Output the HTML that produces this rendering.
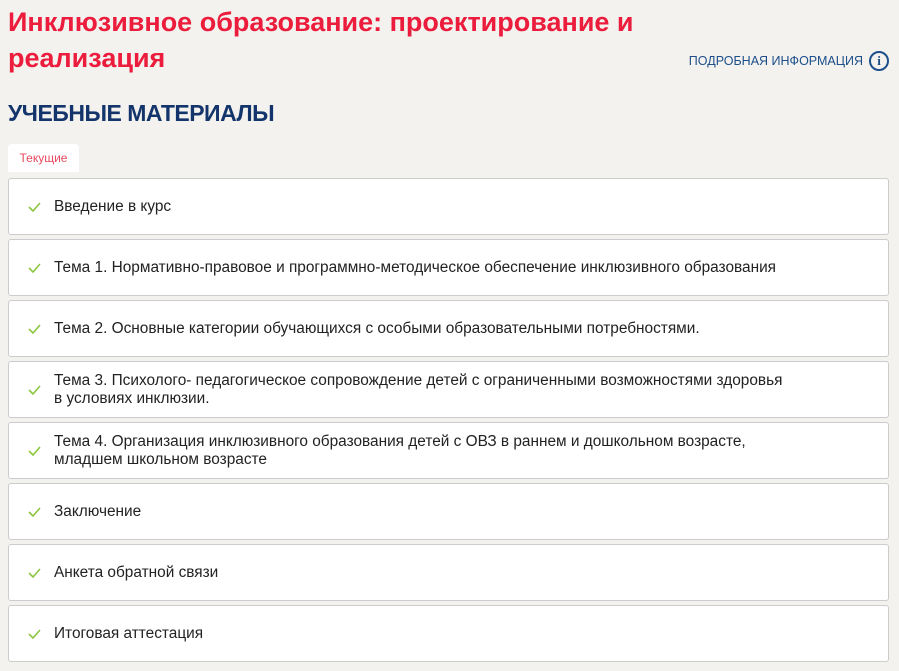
<!DOCTYPE html>
<html><head><meta charset="utf-8"><style>
body{margin:0;background:#f3f2ef;font-family:"Liberation Sans",sans-serif;width:899px;height:671px;overflow:hidden;position:relative}
h1{position:absolute;left:8px;top:4px;margin:0;font-size:27px;line-height:36px;font-weight:bold;color:#ec1c3c;width:680px;letter-spacing:0px}
.info{position:absolute;right:10px;top:51px;font-size:12.5px;color:#1d4f8a;display:flex;align-items:center;gap:6px}
.info span.i{width:16px;height:16px;border:2px solid #1d4f8a;border-radius:50%;display:inline-flex;align-items:center;justify-content:center;font-weight:bold;font-size:13px;font-family:"Liberation Serif",serif}
h2{position:absolute;left:8px;top:100px;margin:0;font-size:23px;font-weight:bold;color:#13356b;letter-spacing:-0.5px}
.tab{position:absolute;left:8px;top:144px;width:71px;height:28px;background:#fff;border-radius:4px 4px 0 0;color:#e8495e;font-size:12px;line-height:28px;text-align:center}
.item{position:absolute;left:8px;width:879px;height:55px;background:#fff;border:1px solid #ccc;border-radius:3px;display:flex;align-items:center;font-size:15.4px;color:#222;line-height:18px}
.item svg{position:absolute;left:19px;top:50%;margin-top:-5px}
.item div{margin-left:45px}
</style></head><body>
<h1>Инклюзивное образование: проектирование и реализация</h1>
<div class="info">ПОДРОБНАЯ ИНФОРМАЦИЯ <span class="i">i</span></div>
<h2>УЧЕБНЫЕ МАТЕРИАЛЫ</h2>
<div class="tab">Текущие</div>
<div class="item" style="top:178px"><svg width="13" height="10"><path d="M1 5l4 4 7-8" stroke="#8cc63f" stroke-width="1.6" fill="none"/></svg><div>Введение в курс</div></div>
<div class="item" style="top:239px"><svg width="13" height="10"><path d="M1 5l4 4 7-8" stroke="#8cc63f" stroke-width="1.6" fill="none"/></svg><div>Тема 1. Нормативно-правовое и программно-методическое обеспечение инклюзивного образования</div></div>
<div class="item" style="top:300px"><svg width="13" height="10"><path d="M1 5l4 4 7-8" stroke="#8cc63f" stroke-width="1.6" fill="none"/></svg><div>Тема 2. Основные категории обучающихся с особыми образовательными потребностями.</div></div>
<div class="item" style="top:361px"><svg width="13" height="10"><path d="M1 5l4 4 7-8" stroke="#8cc63f" stroke-width="1.6" fill="none"/></svg><div>Тема 3. Психолого- педагогическое сопровождение детей с ограниченными возможностями здоровья<br>в условиях инклюзии.</div></div>
<div class="item" style="top:422px"><svg width="13" height="10"><path d="M1 5l4 4 7-8" stroke="#8cc63f" stroke-width="1.6" fill="none"/></svg><div>Тема 4. Организация инклюзивного образования детей с ОВЗ в раннем и дошкольном возрасте,<br>младшем школьном возрасте</div></div>
<div class="item" style="top:483px"><svg width="13" height="10"><path d="M1 5l4 4 7-8" stroke="#8cc63f" stroke-width="1.6" fill="none"/></svg><div>Заключение</div></div>
<div class="item" style="top:544px"><svg width="13" height="10"><path d="M1 5l4 4 7-8" stroke="#8cc63f" stroke-width="1.6" fill="none"/></svg><div>Анкета обратной связи</div></div>
<div class="item" style="top:605px"><svg width="13" height="10"><path d="M1 5l4 4 7-8" stroke="#8cc63f" stroke-width="1.6" fill="none"/></svg><div>Итоговая аттестация</div></div>
</body></html>
